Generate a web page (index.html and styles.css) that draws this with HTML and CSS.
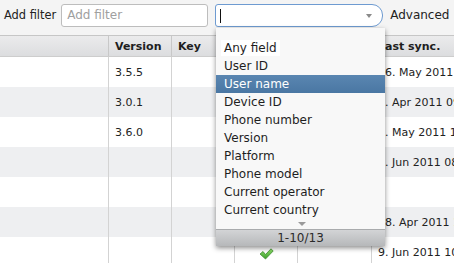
FILE: index.html
```html
<!DOCTYPE html>
<html>
<head>
<meta charset="utf-8">
<link rel="stylesheet" href="styles.css">
</head>
<body>
<div class="app">
  <div class="toolbar">
    <span class="label first">Add filter</span>
    <div class="input"><span class="placeholder">Add filter</span></div>
    <div class="combo"><span class="caret"></span><span class="combo-arrow"></span></div>
    <span class="label adv">Advanced</span>
  </div>
  <div class="table">
    <div class="row head">
      <div class="cell"></div>
      <div class="cell">Version</div>
      <div class="cell">Key</div>
      <div class="cell"></div>
      <div class="cell"></div>
      <div class="cell">Last sync.</div>
    </div>
    <div class="row">
      <div class="cell"></div><div class="cell">3.5.5</div><div class="cell"></div><div class="cell"></div><div class="cell"></div><div class="cell">16. May 2011 14:32</div>
    </div>
    <div class="row alt">
      <div class="cell"></div><div class="cell">3.0.1</div><div class="cell"></div><div class="cell"></div><div class="cell"></div><div class="cell">1. Apr 2011 09:15</div>
    </div>
    <div class="row">
      <div class="cell"></div><div class="cell">3.6.0</div><div class="cell"></div><div class="cell"></div><div class="cell"></div><div class="cell">5. May 2011 11:02</div>
    </div>
    <div class="row alt">
      <div class="cell"></div><div class="cell"></div><div class="cell"></div><div class="cell"></div><div class="cell"></div><div class="cell">7. Jun 2011 08:40</div>
    </div>
    <div class="row">
      <div class="cell"></div><div class="cell"></div><div class="cell"></div><div class="cell"></div><div class="cell"></div><div class="cell"></div>
    </div>
    <div class="row alt">
      <div class="cell"></div><div class="cell"></div><div class="cell"></div><div class="cell"></div><div class="cell"></div><div class="cell">18. Apr 2011 16:20</div>
    </div>
    <div class="row">
      <div class="cell"></div><div class="cell"></div><div class="cell"></div>
      <div class="cell center">
        <svg class="check" width="15" height="12" viewBox="0 0 15 12">
          <defs>
            <linearGradient id="g" x1="0" y1="0" x2="0" y2="1">
              <stop offset="0" stop-color="#8fe06a"/>
              <stop offset="1" stop-color="#3c9d2c"/>
            </linearGradient>
          </defs>
          <polygon points="1,6 4,3.5 6.5,6.5 12,0.8 14.2,3 6.5,11" fill="url(#g)" stroke="#3f8d31" stroke-width="0.8" stroke-linejoin="round"/>
        </svg>
      </div>
      <div class="cell"></div><div class="cell">9. Jun 2011 10:05</div>
    </div>
  </div>

  <div class="popup">
    <div class="items">
      <div class="item"><span class="null">Any field</span></div>
      <div class="item">User ID</div>
      <div class="item sel">User name</div>
      <div class="item">Device ID</div>
      <div class="item">Phone number</div>
      <div class="item">Version</div>
      <div class="item">Platform</div>
      <div class="item">Phone model</div>
      <div class="item">Current operator</div>
      <div class="item">Current country</div>
    </div>
    <div class="next"><span class="next-arrow"></span></div>
    <div class="status">1-10/13</div>
  </div>
</div>
</body>
</html>
```

FILE: styles.css
```css
html, body {
  margin: 0;
  padding: 0;
  background: #fff;
}
.app {
  position: relative;
  width: 454px;
  height: 263px;
  overflow: hidden;
  font-family: "DejaVu Sans", Verdana, sans-serif;
  color: #222;
}
.toolbar {
  border-bottom: 1px solid #c6c6c6;
  background: #f4f4f4;
  display: flex;
  align-items: flex-start;
  padding-top: 4px;
  box-sizing: border-box;
  height: 36px;
  font-size: 12px;
  white-space: nowrap;
}
.label {
  margin-left: 4px;
  line-height: 23px;
}
.label.first {
  font-size: 11.4px;
}
.input {
  margin-left: 5px;
  width: 147px;
  height: 23px;
  box-sizing: border-box;
  border: 1px solid #bdbdbd;
  border-radius: 3px;
  background: #fff;
  padding-left: 5px;
  line-height: 21px;
}
.placeholder {
  color: #a0a0a0;
}
.combo {
  margin-left: 7px;
  width: 168px;
  height: 23px;
  box-sizing: border-box;
  border: 1px solid #6e9bd1;
  border-radius: 3px 11px 11px 3px;
  background: #fff;
  display: flex;
  align-items: center;
  justify-content: space-between;
  padding: 0 10px 0 4px;
}
.caret {
  width: 1px;
  height: 14px;
  background: #111;
}
.combo-arrow {
  width: 0;
  height: 0;
  border-left: 3px solid transparent;
  border-right: 3px solid transparent;
  border-top: 4px solid #8a8a8a;
}
.adv {
  margin-left: 7px;
}
.table {
  font-size: 11px;
  white-space: nowrap;
}
.row {
  display: grid;
  grid-template-columns: 108px 63px 63px 63px 74px 1fr;
  height: 30px;
  background: #fff;
}
.row.alt {
  background: #eeeff1;
}
.row.head {
  height: 21px;
  box-sizing: border-box;
  border-bottom: 1px solid #cdcdcd;
  background: linear-gradient(#ebebec, #dcdddf);
  font-weight: bold;
  color: #1e1e1e;
}
.cell {
  padding-left: 6px;
  display: flex;
  align-items: center;
  overflow: hidden;
}
.cell + .cell {
  border-left: 1px solid #d3d3d3;
}
.row.head .cell + .cell {
  border-left: 1px solid #c8c8c8;
}
.cell.center {
  justify-content: center;
  padding-left: 0;
  padding-top: 4px;
}
.popup {
  position: absolute;
  left: 216px;
  top: 28px;
  width: 169px;
  height: 218px;
  background: #f8f8f8;
  box-shadow: 0 2px 5px rgba(0, 0, 0, 0.45);
  font-size: 12px;
  color: #1e1e1e;
  display: flex;
  flex-direction: column;
  white-space: nowrap;
}
.items {
  padding-top: 11px;
}
.item {
  height: 18px;
  line-height: 18px;
  padding-left: 8px;
}
.null {
  background: #fff;
  padding: 1px 3px 1px 3px;
  margin-left: -3px;
}
.item.sel {
  background: linear-gradient(#5a86b1, #4a77a3);
  color: #fff;
}
.next {
  height: 11px;
  display: flex;
  justify-content: center;
  padding-top: 3px;
  box-sizing: border-box;
}
.next-arrow {
  width: 0;
  height: 0;
  margin-left: 2px;
  border-left: 4px solid transparent;
  border-right: 4px solid transparent;
  border-top: 4px solid #9a9a9a;
}
.status {
  flex: 1;
  border-top: 1px solid #a9abad;
  background: linear-gradient(#d3d4d6, #b6b8ba);
  text-align: center;
  line-height: 16px;
  color: #2a2a2a;
}
```
